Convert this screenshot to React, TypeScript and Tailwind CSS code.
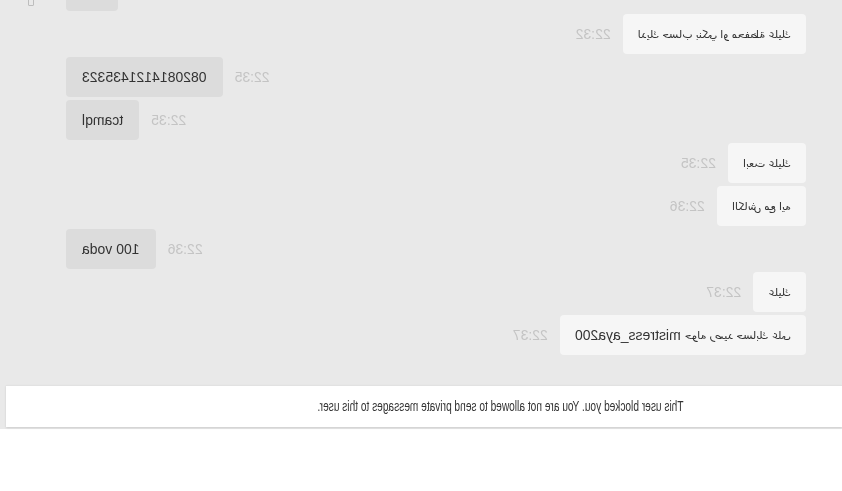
type Msg = {
  id: number;
  mine: boolean;
  text: string;
  time: string;
  arabic?: boolean;
};

const messages: Msg[] = [
  { id: 2, mine: true, text: "لديك حساب بنكي او محفظة عليك", time: "22:32", arabic: true },
  { id: 3, mine: false, text: "0820814121435323", time: "22:35" },
  { id: 4, mine: false, text: "tcamql", time: "22:35" },
  { id: 5, mine: true, text: "ابعت عليك", time: "22:35", arabic: true },
  { id: 6, mine: true, text: "الكاش مع ايه", time: "22:36", arabic: true },
  { id: 7, mine: false, text: "100 voda", time: "22:36" },
  { id: 8, mine: true, text: "عليك", time: "22:37", arabic: true },
];

function Bubble({ msg }: { msg: Msg }) {
  return (
    <div
      className={
        msg.mine
          ? "flex h-10 items-center rounded-sm bg-[#f6f6f6] px-[15px] text-[#333]"
          : "flex h-10 items-center rounded-sm bg-[#dcdcdc] px-4 text-[#333]"
      }
    >
      <span className={msg.arabic ? "text-[11px]" : "text-[14px]"}>{msg.text}</span>
    </div>
  );
}

function Time({ value }: { value: string }) {
  return <span className="mx-3 text-[14px] text-[#c4c4c4]">{value}</span>;
}

function Row({ msg }: { msg: Msg }) {
  if (msg.mine) {
    return (
      <div className="flex items-center">
        <Bubble msg={msg} />
        <Time value={msg.time} />
      </div>
    );
  }
  return (
    <div className="flex items-center justify-end">
      <Time value={msg.time} />
      <Bubble msg={msg} />
    </div>
  );
}

export default function App() {
  return (
    <div className="h-screen w-full overflow-hidden bg-white font-['Liberation_Sans','DejaVu_Sans',Arial,sans-serif]">
      {/* conversation view, flipped horizontally */}
      <div className="w-full [transform:rotateY(180deg)]">
        <div className="bg-[#e9e9e9] pb-[2px]">
          <div className="-mt-[29px] flex flex-col gap-[3px] pl-[36px] pr-[66px]">
            {/* tail of the previous message, scrolled out of view */}
            <div className="flex items-center justify-end">
              <div className="h-10 w-[52px] rounded-sm bg-[#dcdcdc]" />
              <div className="mb-[5px] ml-[32px] -mr-[38px] h-[10px] w-[6px] self-end rounded-[1px] border border-[#bdbdbd]" />
            </div>
            {messages.map((m) => (
              <Row key={m.id} msg={m} />
            ))}
            <div className="flex items-center">
              <div className="flex h-10 items-center rounded-sm bg-[#f6f6f6] px-[15px] text-[#333]">
                <span className="text-[11px]">حوله رصيد حسابك على</span>
                <span className="ml-1 text-[14px]">mistress_aya200</span>
              </div>
              <Time value="22:37" />
            </div>
          </div>

          <div className="mr-[6px] mt-[30px] flex h-[42px] items-center justify-center border-t border-[#e2e2e2] bg-white pr-[152px] shadow-[0_1px_2px_rgba(0,0,0,0.12)]">
            <span className="inline-block text-[14px] text-[#333] [transform:scaleX(0.725)]">
              This user blocked you. You are not allowed to send private messages to this user.
            </span>
          </div>
        </div>
      </div>
    </div>
  );
}
